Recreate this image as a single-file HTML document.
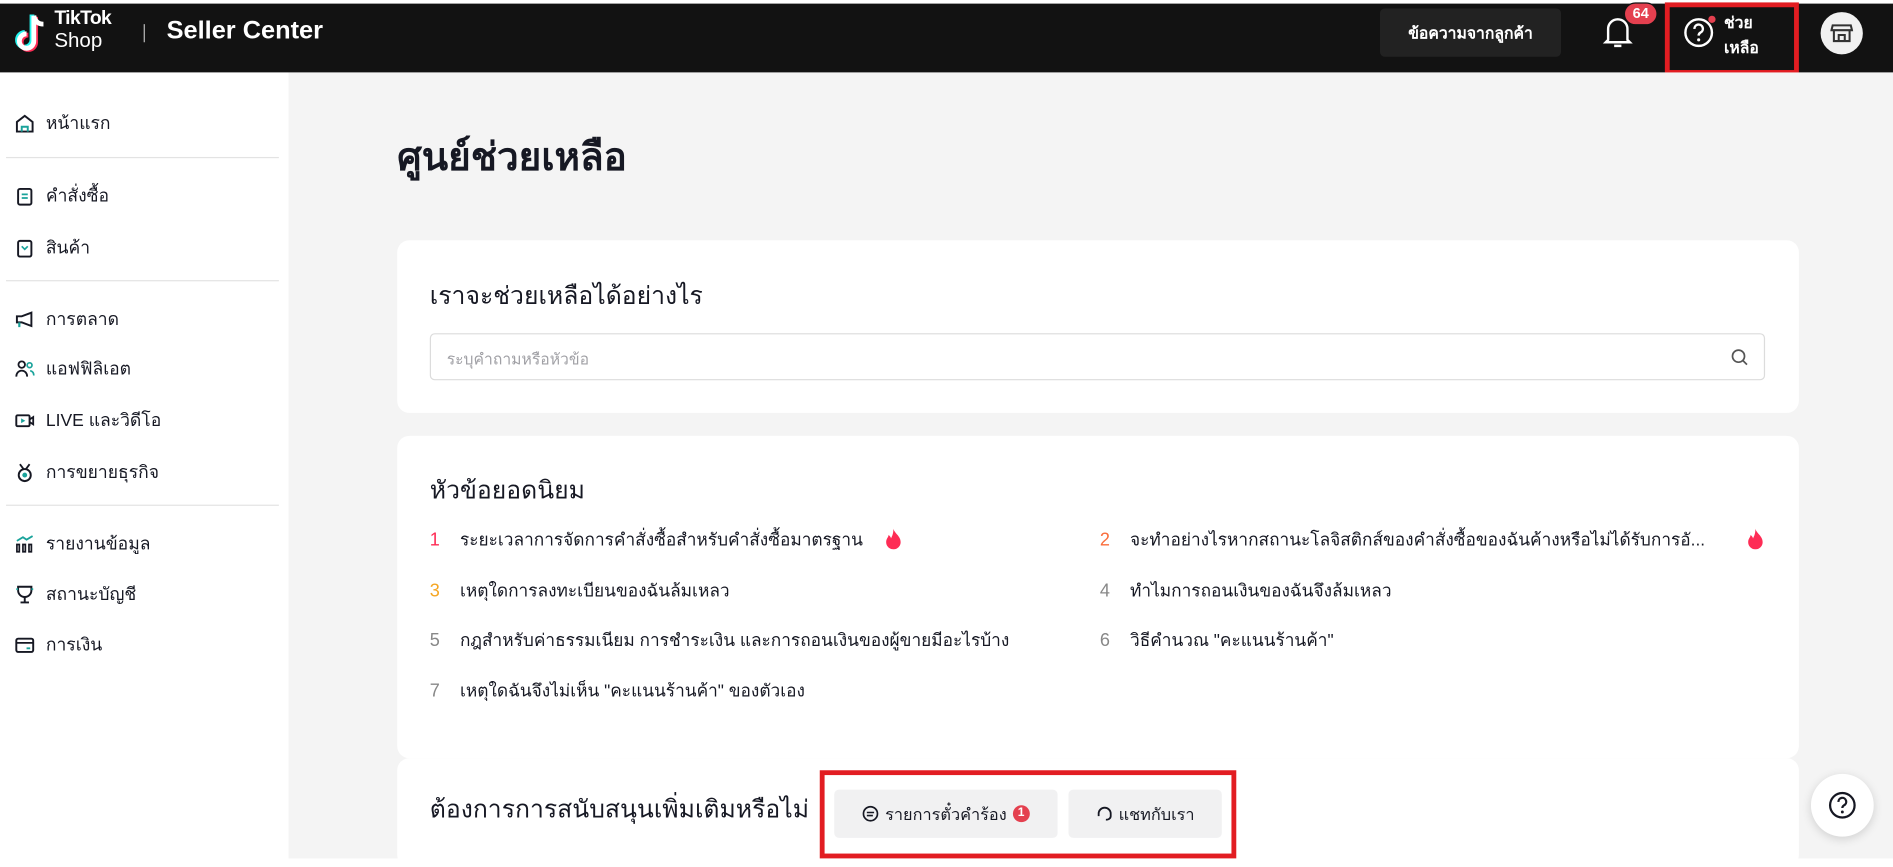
<!DOCTYPE html>
<html><head><meta charset="utf-8">
<style>
*{box-sizing:border-box;margin:0;padding:0}
html,body{width:1893px;height:858px;overflow:hidden;background:#fff}
#w{position:absolute;left:0;top:0;width:1568px;height:711px;transform:scale(1.2073);transform-origin:0 0;font-family:"Liberation Sans","Noto Sans CJK SC",sans-serif;color:#161823}
.a{position:absolute}
.hdr{left:0;top:3px;width:1568px;height:57px;background:#121212}
.side{left:0;top:60px;width:239px;height:651px;background:#fff}
.main{left:239px;top:60px;width:1329px;height:651px;background:#f4f4f4}
.nav{position:absolute;left:12px;font-size:14.5px;display:flex;align-items:center;gap:9px;color:#161823}
.nav svg{width:17px;height:17px}
.hr{position:absolute;left:5px;width:226px;height:1px;background:#e3e3e3}
.card{position:absolute;left:329px;width:1161px;background:#fff;border-radius:10px}
.it{position:absolute;font-size:14.3px;white-space:nowrap}
.it b{font-weight:400;display:inline-block;width:25px;font-size:15px}
.btn{position:absolute;background:#f1f1f2;border-radius:4px;font-size:13.5px;display:flex;align-items:center;justify-content:center;gap:5px;color:#161823}
</style></head><body><div id="w">
<div class="a hdr"></div>
<svg class="a" style="left:12px;top:10px" width="30" height="38" viewBox="0 0 30 38">
<path d="M16 3v21a6 6 0 1 1-6-6" fill="none" stroke="#25f4ee" stroke-width="4" transform="translate(-1.5,-1)"/>
<path d="M16 3v21a6 6 0 1 1-6-6" fill="none" stroke="#fe2c55" stroke-width="4" transform="translate(1.5,1)"/>
<path d="M16 3v21a6 6 0 1 1-6-6M16 3c1 5 4 7 8 7" fill="none" stroke="#fff" stroke-width="4"/>
</svg>
<div class="a" style="left:45px;top:8px;color:#fff;font-size:16px;font-weight:700;line-height:16px;letter-spacing:-.5px">TikTok</div>
<div class="a" style="left:45px;top:25px;color:#fff;font-size:17px;line-height:18px">Shop</div>
<div class="a" style="left:119px;top:20px;width:1px;height:15px;background:#bbb"></div>
<div class="a" style="left:138px;top:14px;color:#fff;font-size:21px;font-weight:700">Seller Center</div>
<div class="a" style="left:1143px;top:7px;width:150px;height:40px;background:#222;border-radius:4px;color:#fff;font-size:13px;display:flex;align-items:center;justify-content:center;font-weight:700">ข้อความจากลูกค้า</div>
<svg class="a" style="left:1327px;top:12px" width="26" height="30" viewBox="0 0 26 30"><path d="M5 21V12a8 8 0 0 1 16 0v9l2 2H3z" fill="none" stroke="#fff" stroke-width="2"/><path d="M10 26h6" stroke="#fff" stroke-width="2"/></svg>
<div class="a" style="left:1345px;top:2px;width:28px;height:19px;background:#e4404f;border:1.5px solid #121212;border-radius:10px;color:#fff;font-size:12px;font-weight:700;text-align:center;line-height:16px">64</div>
<div class="a" style="left:1379px;top:2px;width:111px;height:60px;border:4px solid #e21d22"></div>
<svg class="a" style="left:1394px;top:14px" width="26" height="26" viewBox="0 0 26 26"><circle cx="13" cy="13" r="11" fill="none" stroke="#fff" stroke-width="2"/><path d="M9.5 10a3.5 3.5 0 1 1 5 3c-1 .6-1.5 1.2-1.5 2.5" fill="none" stroke="#fff" stroke-width="2"/><circle cx="13" cy="19" r="1.3" fill="#fff"/></svg>
<div class="a" style="left:1415px;top:13px;width:6px;height:6px;border-radius:50%;background:#e4404f"></div>
<div class="a" style="left:1428px;top:8px;color:#fff;font-size:13px;font-weight:700;line-height:21px">ช่วย<br>เหลือ</div>
<div class="a" style="left:1508px;top:10px;width:35px;height:35px;border-radius:50%;background:#f1f1f1"></div>
<svg class="a" style="left:1516px;top:18px" width="19" height="19" viewBox="0 0 19 19"><path d="M3 7v9h13V7M2 3h15l1 4H1zM7 16v-5h5v5" fill="none" stroke="#333" stroke-width="1.7"/></svg>

<div class="a side"></div>
<div class="a main"></div>
<div class="nav" style="top:91px"><svg viewBox="0 0 17 17"><path d="M2 7l6.5-5 6.5 5v8H2z" fill="none" stroke="#161823" stroke-width="1.6"/><path d="M6 15v-4h5v4" fill="none" stroke="#1aa39b" stroke-width="1.6"/></svg>หน้าแรก</div>
<div class="hr" style="top:130px"></div>
<div class="nav" style="top:151px"><svg viewBox="0 0 17 17"><rect x="3" y="2.5" width="11" height="13" rx="1.5" fill="none" stroke="#161823" stroke-width="1.6"/><path d="M6 7h5M6 10h5" stroke="#1aa39b" stroke-width="1.4"/></svg>คำสั่งซื้อ</div>
<div class="nav" style="top:194px"><svg viewBox="0 0 17 17"><rect x="3" y="2.5" width="11" height="13" rx="1.5" fill="none" stroke="#161823" stroke-width="1.6"/><path d="M6 7l2.5 2.5L11 7" fill="none" stroke="#1aa39b" stroke-width="1.4"/></svg>สินค้า</div>
<div class="hr" style="top:232px"></div>
<div class="nav" style="top:253px"><svg viewBox="0 0 17 17"><path d="M2 6h4l8-3v11l-8-3H2z" fill="none" stroke="#161823" stroke-width="1.6"/><path d="M4 11v4" stroke="#1aa39b" stroke-width="1.8"/></svg>การตลาด</div>
<div class="nav" style="top:294px"><svg viewBox="0 0 17 17"><circle cx="6" cy="5" r="2.7" fill="none" stroke="#161823" stroke-width="1.5"/><path d="M1.5 15c0-3 2-5 4.5-5s4.5 2 4.5 5" fill="none" stroke="#161823" stroke-width="1.5"/><circle cx="12.5" cy="5.5" r="2" fill="none" stroke="#1aa39b" stroke-width="1.4"/><path d="M13 10c2 .5 3 2 3 4" fill="none" stroke="#1aa39b" stroke-width="1.4"/></svg>แอฟฟิลิเอต</div>
<div class="nav" style="top:337px"><svg viewBox="0 0 17 17"><rect x="1.5" y="4" width="11" height="9" rx="1" fill="none" stroke="#161823" stroke-width="1.6"/><path d="M12.5 7.5l3-2v6l-3-2" fill="none" stroke="#161823" stroke-width="1.5"/><path d="M5.5 6.5v4l3.5-2z" fill="#1aa39b"/></svg>LIVE และวิดีโอ</div>
<div class="nav" style="top:380px"><svg viewBox="0 0 17 17"><circle cx="8.5" cy="10.5" r="5" fill="none" stroke="#161823" stroke-width="1.6"/><path d="M4.5 1.5l3 4M12.5 1.5l-3 4" stroke="#161823" stroke-width="1.5"/><circle cx="8.5" cy="10.5" r="2" fill="#1aa39b"/></svg>การขยายธุรกิจ</div>
<div class="hr" style="top:418px"></div>
<div class="nav" style="top:439px"><svg viewBox="0 0 17 17"><path d="M2 9h2v6H2zM7 9h2v6H7zM12 9h2v6h-2z" fill="none" stroke="#161823" stroke-width="1.4"/><path d="M2 6l5-3 3 2 5-3" fill="none" stroke="#1aa39b" stroke-width="1.5"/></svg>รายงานข้อมูล</div>
<div class="nav" style="top:481px"><svg viewBox="0 0 17 17"><path d="M3 2h11v3a5.5 5.5 0 0 1-11 0z" fill="none" stroke="#161823" stroke-width="1.6"/><path d="M8.5 10.5v4M5 15h7" stroke="#161823" stroke-width="1.6"/><path d="M3 4H1.5M14 4h1.5" stroke="#1aa39b" stroke-width="1.5"/></svg>สถานะบัญชี</div>
<div class="nav" style="top:523px"><svg viewBox="0 0 17 17"><rect x="1.5" y="3" width="14" height="11" rx="1.5" fill="none" stroke="#161823" stroke-width="1.6"/><path d="M1.5 6.5h14" stroke="#161823" stroke-width="1.5"/><path d="M10 11h3" stroke="#1aa39b" stroke-width="1.5"/></svg>การเงิน</div>

<div class="a" style="left:329px;top:105px;font-size:32px;font-weight:700">ศูนย์ช่วยเหลือ</div>

<div class="card" style="top:199px;height:143px"></div>
<div class="a" style="left:356px;top:229px;font-size:20.5px">เราจะช่วยเหลือได้อย่างไร</div>
<div class="a" style="left:356px;top:276px;width:1106px;height:39px;border:1px solid #dcdcdc;border-radius:4px;background:#fff"></div>
<div class="a" style="left:370px;top:287px;font-size:13px;color:#a0a0a5">ระบุคำถามหรือหัวข้อ</div>
<svg class="a" style="left:1433px;top:288px" width="16" height="16" viewBox="0 0 16 16"><circle cx="7" cy="7" r="5" fill="none" stroke="#555" stroke-width="1.4"/><path d="M10.5 10.5l3.5 3.5" stroke="#555" stroke-width="1.4"/></svg>

<div class="card" style="top:361px;height:267px"></div>
<div class="a" style="left:356px;top:390px;font-size:20.5px">หัวข้อยอดนิยม</div>
<div class="it" style="left:356px;top:437px"><b style="color:#fe2c55">1</b>ระยะเวลาการจัดการคำสั่งซื้อสำหรับคำสั่งซื้อมาตรฐาน</div>
<div class="it" style="left:911px;top:437px"><b style="color:#fa6e3c">2</b>จะทำอย่างไรหากสถานะโลจิสติกส์ของคำสั่งซื้อของฉันค้างหรือไม่ได้รับการอั...</div>
<div class="it" style="left:356px;top:479px"><b style="color:#f5a623">3</b>เหตุใดการลงทะเบียนของฉันล้มเหลว</div>
<div class="it" style="left:911px;top:479px"><b style="color:#888">4</b>ทำไมการถอนเงินของฉันจึงล้มเหลว</div>
<div class="it" style="left:356px;top:520px"><b style="color:#888">5</b>กฎสำหรับค่าธรรมเนียม การชำระเงิน และการถอนเงินของผู้ขายมีอะไรบ้าง</div>
<div class="it" style="left:911px;top:520px"><b style="color:#888">6</b>วิธีคำนวณ "คะแนนร้านค้า"</div>
<div class="it" style="left:356px;top:562px"><b style="color:#888">7</b>เหตุใดฉันจึงไม่เห็น "คะแนนร้านค้า" ของตัวเอง</div>
<svg class="a" style="left:732px;top:437px" width="16" height="18" viewBox="0 0 16 18"><path d="M8 1c1 4 6 6 6 11a6 6 0 0 1-12 0c0-3 2-4 2-6 1 1 2 2 2 3 1-2 2-4 2-8z" fill="#fe2c55"/></svg>
<svg class="a" style="left:1446px;top:437px" width="16" height="18" viewBox="0 0 16 18"><path d="M8 1c1 4 6 6 6 11a6 6 0 0 1-12 0c0-3 2-4 2-6 1 1 2 2 2 3 1-2 2-4 2-8z" fill="#fe2c55"/></svg>

<div class="card" style="top:628px;height:90px"></div>
<div class="a" style="left:356px;top:654px;font-size:20.5px">ต้องการการสนับสนุนเพิ่มเติมหรือไม่</div>
<div class="btn" style="left:691px;top:654px;width:185px;height:40px"><svg width="14" height="14" viewBox="0 0 14 14"><circle cx="7" cy="7" r="5.8" fill="none" stroke="#161823" stroke-width="1.4"/><path d="M4 6h6M4 8.5h5" stroke="#161823" stroke-width="1.3"/></svg>รายการตั๋วคำร้อง<span style="display:inline-block;width:14px;height:14px;border-radius:50%;background:#e4404f;color:#fff;font-size:10px;font-weight:700;text-align:center;line-height:14px">1</span></div>
<div class="btn" style="left:885px;top:654px;width:127px;height:40px"><svg width="14" height="14" viewBox="0 0 14 14"><path d="M2 9V7a5 5 0 0 1 10 0v2M12 9c0 2-2 3-4 3" fill="none" stroke="#161823" stroke-width="1.5"/></svg>แชทกับเรา</div>
<div class="a" style="left:679px;top:638px;width:345px;height:73px;border:4px solid #e21d22"></div>

<div class="a" style="left:1500px;top:641px;width:52px;height:52px;border-radius:50%;background:#fff;box-shadow:0 2px 8px rgba(0,0,0,.15)"></div>
<svg class="a" style="left:1514px;top:655px" width="24" height="24" viewBox="0 0 26 26"><circle cx="13" cy="13" r="11" fill="none" stroke="#161823" stroke-width="2"/><path d="M9.5 10a3.5 3.5 0 1 1 5 3c-1 .6-1.5 1.2-1.5 2.5" fill="none" stroke="#161823" stroke-width="2"/><circle cx="13" cy="19" r="1.3" fill="#161823"/></svg>
</div></body></html>
